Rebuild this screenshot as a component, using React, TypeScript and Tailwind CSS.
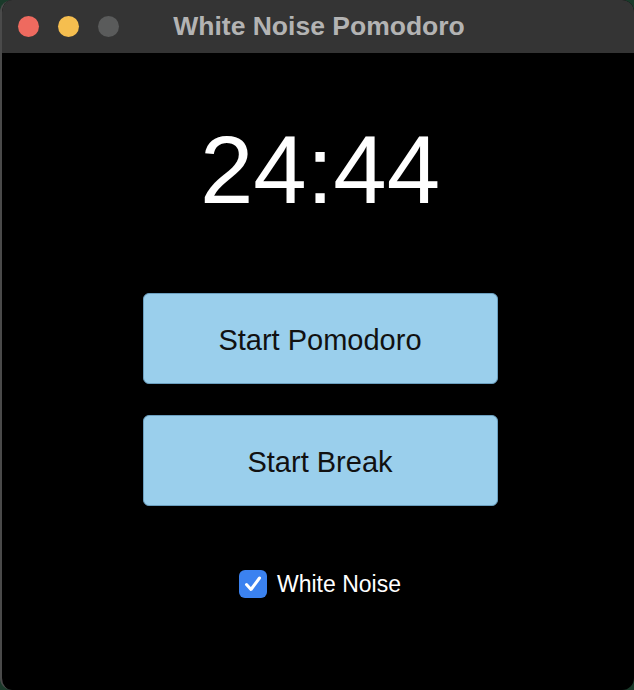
export default function App() {
  return (
    <div className="w-[634px] h-[690px] bg-[#1a3a2a]" style={{ fontFamily: '"Liberation Sans", Arial, sans-serif' }}>
      <div className="w-full h-full rounded-[12px] overflow-hidden bg-black border-l-2 border-[#4a4a4a] flex flex-col">
        {/* title bar */}
        <div className="h-[53px] shrink-0 bg-[#343434] relative flex items-center justify-center pl-[2px]">
          <div className="absolute left-[16px] top-[16px] flex gap-[19px]">
            <span className="w-[21px] h-[21px] rounded-full bg-[#ee6a5f]" />
            <span className="w-[21px] h-[21px] rounded-full bg-[#f5be4f]" />
            <span className="w-[21px] h-[21px] rounded-full bg-[#5a5b5b]" />
          </div>
          <span className="text-[26.5px] font-bold text-[#b3b3b3] leading-none">White Noise Pomodoro</span>
        </div>

        <div className="flex flex-col items-center pt-[69px] pl-[4px]">
          <div className="text-white text-[96px] leading-none">24:44</div>

          <button className="mt-[75px] w-[355px] h-[91px] pt-[4px] rounded-[6px] bg-[#9acfec] border border-[#6b9fbf] text-[#111] text-[29px]">
            Start Pomodoro
          </button>
          <button className="mt-[31px] w-[355px] h-[91px] pt-[4px] rounded-[6px] bg-[#9acfec] border border-[#6b9fbf] text-[#111] text-[29px]">
            Start Break
          </button>

          <label className="mt-[61px] flex items-center gap-[10px] text-white text-[23px]">
            <span className="w-[28px] h-[28px] rounded-[6px] bg-[#3b82f0] flex items-center justify-center">
              <svg width="20" height="20" viewBox="0 0 20 20" fill="none">
                <path d="M3.5 10.5 L8 15.5 L16.5 4" stroke="white" strokeWidth="3" strokeLinecap="round" strokeLinejoin="round" />
              </svg>
            </span>
            White Noise
          </label>
        </div>
      </div>
    </div>
  )
}
